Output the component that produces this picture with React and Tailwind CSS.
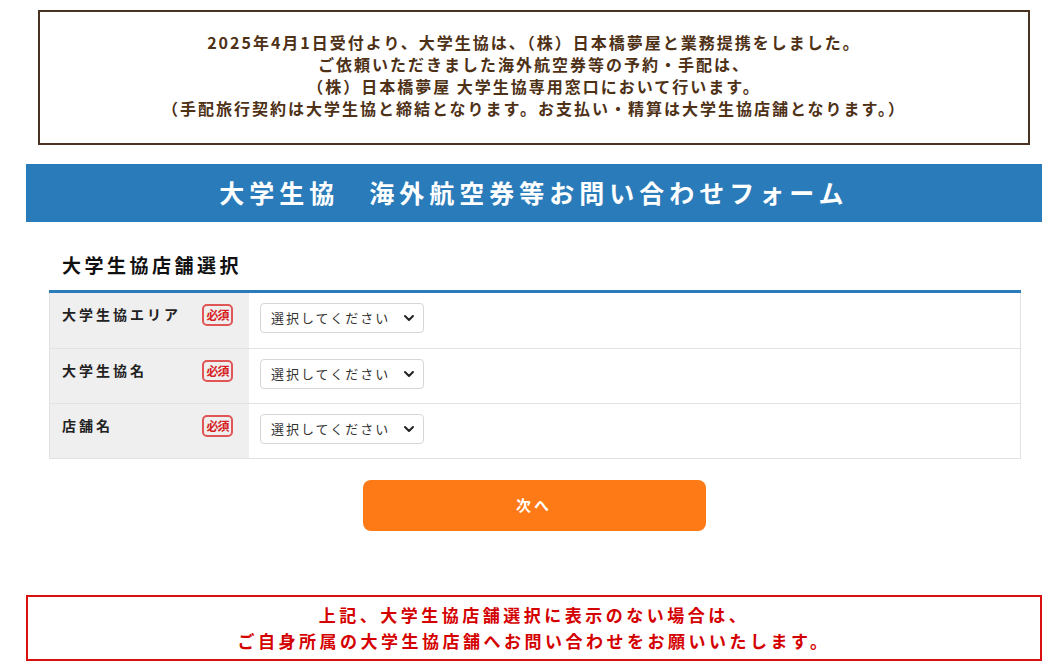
import React from "react";
import { ChevronDown } from "lucide-react";

const fields = [
  { label: "大学生協エリア" },
  { label: "大学生協名" },
  { label: "店舗名" },
];

function Required() {
  return (
    <span className="flex items-center justify-center w-[31px] h-[22px] border-2 border-[#e05555] rounded-[5px] text-[#d62020] text-[12px] font-bold leading-none tracking-[-1px]">
      必須
    </span>
  );
}

function SelectBox() {
  return (
    <div className="flex items-center justify-between w-[164px] h-[30px] border border-[#d6d6d6] rounded-[4px] bg-white pl-[10px] pr-[6px]">
      <span className="text-[13px] tracking-[2px] text-[#333]">選択してください</span>
      <ChevronDown size={16} strokeWidth={3} className="text-[#222]" />
    </div>
  );
}

export default function App() {
  return (
    <div
      className="min-h-screen bg-white"
      style={{ fontFamily: '"Noto Sans CJK JP", "Noto Sans", sans-serif' }}
    >
      <div className="w-[1016px] ml-[26px] pt-[10px] pb-[9px] flex flex-col">
        {/* notice */}
        <div className="mx-[12px] border-2 border-[#4a3322] pt-[19px] pb-[24px] text-center text-[#4e3116] text-[16px] font-bold leading-[22px] tracking-[2px]">
          <p>2025年4月1日受付より、大学生協は、（株）日本橋夢屋と業務提携をしました。</p>
          <p>ご依頼いただきました海外航空券等の予約・手配は、</p>
          <p>（株）日本橋夢屋 大学生協専用窓口において行います。</p>
          <p>（手配旅行契約は大学生協と締結となります。お支払い・精算は大学生協店舗となります。）</p>
        </div>

        {/* title bar */}
        <div className="mt-[19px] h-[58px] bg-[#2a7bb9] flex items-center justify-center">
          <h1 className="text-white text-[25px] font-bold tracking-[5px]">
            大学生協　海外航空券等お問い合わせフォーム
          </h1>
        </div>

        {/* section */}
        <h2 className="mt-[30px] ml-[36px] text-[19px] font-bold tracking-[3.5px] text-[#111] leading-[26px]">
          大学生協店舗選択
        </h2>

        <div className="mt-[12px] ml-[23px] mr-[21px] border-t-[3px] border-[#2a7bb9]">
          <div className="border-x border-b border-[#e2e2e2]">
            {fields.map((f, i) => (
              <div
                key={f.label}
                className={`flex h-[55px] ${i > 0 ? "border-t border-[#e2e2e2]" : ""}`}
              >
                <div className="w-[199px] bg-[#efefef] flex items-start justify-between pl-[12px] pr-[16px] pt-[11px]">
                  <span className="text-[14px] font-bold tracking-[3px] text-[#222] leading-[20px]">
                    {f.label}
                  </span>
                  <Required />
                </div>
                <div className="flex-1 pl-[11px] pt-[10px]">
                  <SelectBox />
                </div>
              </div>
            ))}
          </div>
        </div>

        <div className="mt-[21px] flex justify-center">
          <button className="w-[343px] h-[51px] rounded-[8px] bg-[#fe7a16] text-white text-[15px] font-bold tracking-[3px]">
            次へ
          </button>
        </div>

        {/* footer notice */}
        <div className="mt-[64px] border-2 border-[#d91010] py-[5px] text-center text-[#d40000] text-[17px] font-bold leading-[26px] tracking-[3.5px]">
          <p>上記、大学生協店舗選択に表示のない場合は、</p>
          <p>ご自身所属の大学生協店舗へお問い合わせをお願いいたします。</p>
        </div>
      </div>
    </div>
  );
}
